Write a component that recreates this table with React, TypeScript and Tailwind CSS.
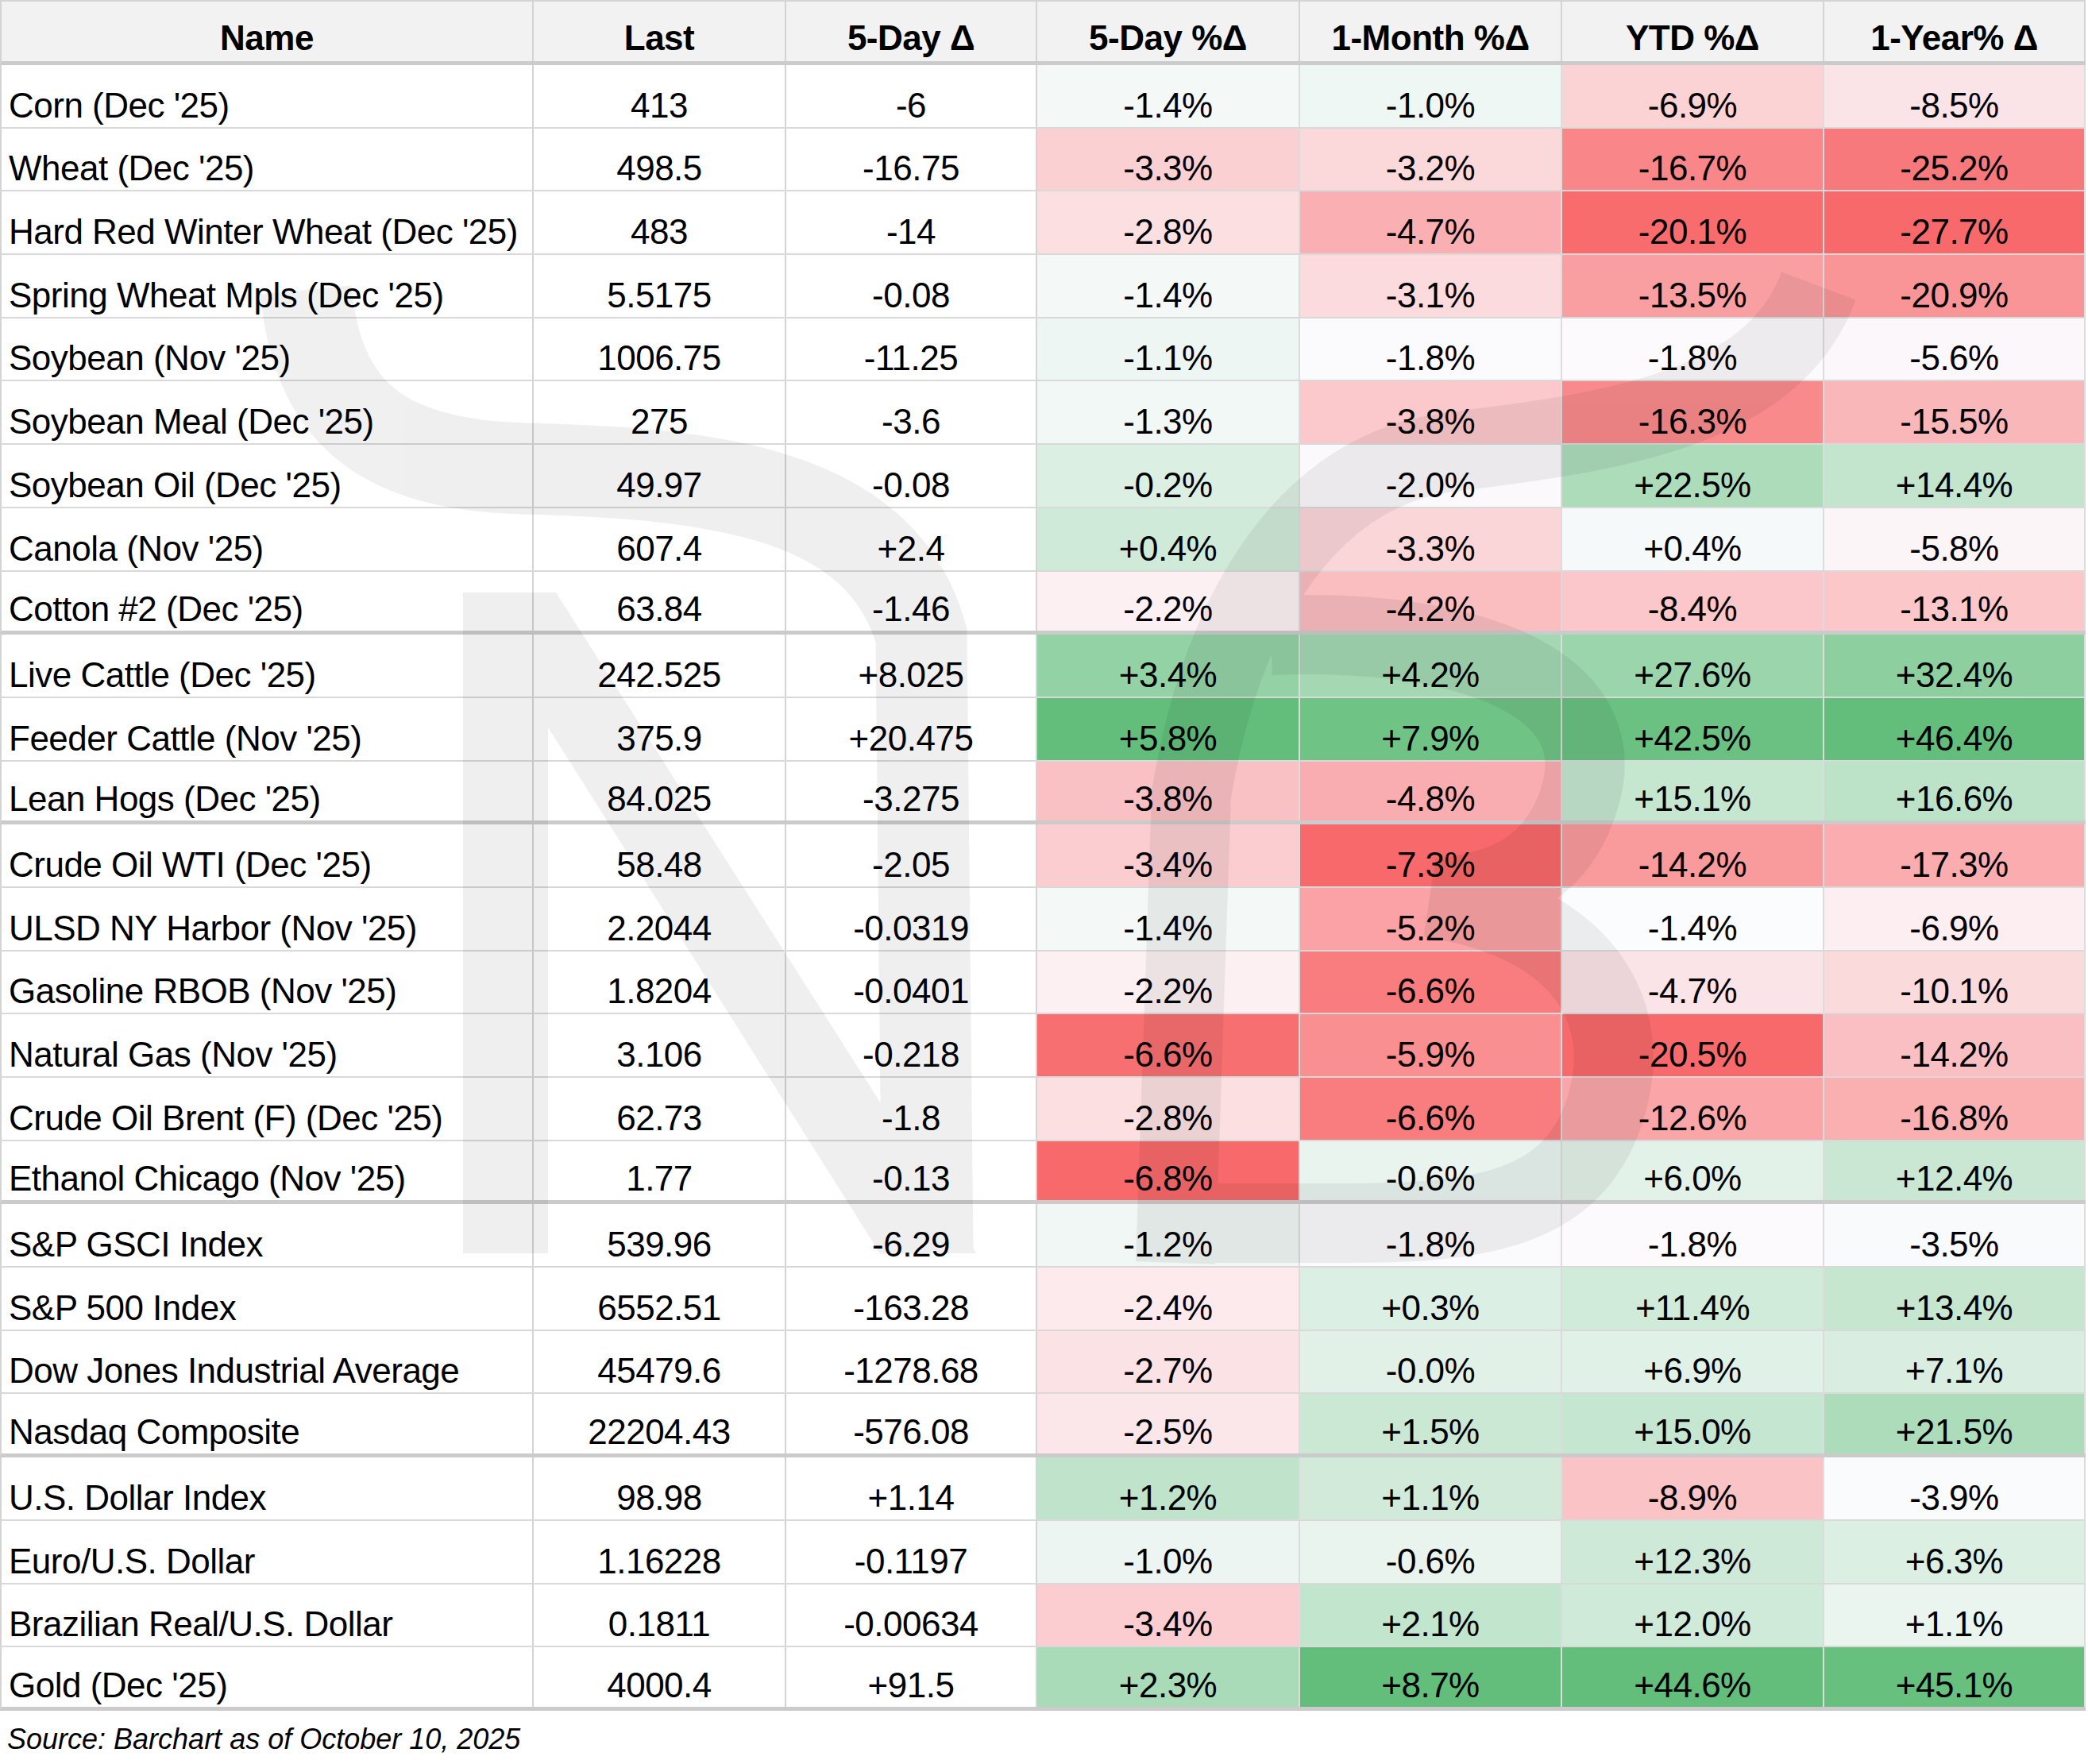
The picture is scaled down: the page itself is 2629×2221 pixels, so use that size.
import React from 'react';

type Row = {
  name: string;
  last: string;
  d5: string;
  p5: string;
  m1: string;
  ytd: string;
  y1: string;
  end?: boolean;
};

type PctKey = 'p5' | 'm1' | 'ytd' | 'y1';

// Commodity snapshot (Barchart, Oct 10 2025)
const rows: Row[] = [
  { name: "Corn (Dec '25)", last: '413', d5: '-6', p5: '-1.4%', m1: '-1.0%', ytd: '-6.9%', y1: '-8.5%' },
  { name: "Wheat (Dec '25)", last: '498.5', d5: '-16.75', p5: '-3.3%', m1: '-3.2%', ytd: '-16.7%', y1: '-25.2%' },
  { name: "Hard Red Winter Wheat (Dec '25)", last: '483', d5: '-14', p5: '-2.8%', m1: '-4.7%', ytd: '-20.1%', y1: '-27.7%' },
  { name: "Spring Wheat Mpls (Dec '25)", last: '5.5175', d5: '-0.08', p5: '-1.4%', m1: '-3.1%', ytd: '-13.5%', y1: '-20.9%' },
  { name: "Soybean (Nov '25)", last: '1006.75', d5: '-11.25', p5: '-1.1%', m1: '-1.8%', ytd: '-1.8%', y1: '-5.6%' },
  { name: "Soybean Meal (Dec '25)", last: '275', d5: '-3.6', p5: '-1.3%', m1: '-3.8%', ytd: '-16.3%', y1: '-15.5%' },
  { name: "Soybean Oil (Dec '25)", last: '49.97', d5: '-0.08', p5: '-0.2%', m1: '-2.0%', ytd: '+22.5%', y1: '+14.4%' },
  { name: "Canola (Nov '25)", last: '607.4', d5: '+2.4', p5: '+0.4%', m1: '-3.3%', ytd: '+0.4%', y1: '-5.8%' },
  { name: "Cotton #2 (Dec '25)", last: '63.84', d5: '-1.46', p5: '-2.2%', m1: '-4.2%', ytd: '-8.4%', y1: '-13.1%', end: true },
  { name: "Live Cattle (Dec '25)", last: '242.525', d5: '+8.025', p5: '+3.4%', m1: '+4.2%', ytd: '+27.6%', y1: '+32.4%' },
  { name: "Feeder Cattle (Nov '25)", last: '375.9', d5: '+20.475', p5: '+5.8%', m1: '+7.9%', ytd: '+42.5%', y1: '+46.4%' },
  { name: "Lean Hogs (Dec '25)", last: '84.025', d5: '-3.275', p5: '-3.8%', m1: '-4.8%', ytd: '+15.1%', y1: '+16.6%', end: true },
  { name: "Crude Oil WTI (Dec '25)", last: '58.48', d5: '-2.05', p5: '-3.4%', m1: '-7.3%', ytd: '-14.2%', y1: '-17.3%' },
  { name: "ULSD NY Harbor (Nov '25)", last: '2.2044', d5: '-0.0319', p5: '-1.4%', m1: '-5.2%', ytd: '-1.4%', y1: '-6.9%' },
  { name: "Gasoline RBOB (Nov '25)", last: '1.8204', d5: '-0.0401', p5: '-2.2%', m1: '-6.6%', ytd: '-4.7%', y1: '-10.1%' },
  { name: "Natural Gas (Nov '25)", last: '3.106', d5: '-0.218', p5: '-6.6%', m1: '-5.9%', ytd: '-20.5%', y1: '-14.2%' },
  { name: "Crude Oil Brent (F) (Dec '25)", last: '62.73', d5: '-1.8', p5: '-2.8%', m1: '-6.6%', ytd: '-12.6%', y1: '-16.8%' },
  { name: "Ethanol Chicago (Nov '25)", last: '1.77', d5: '-0.13', p5: '-6.8%', m1: '-0.6%', ytd: '+6.0%', y1: '+12.4%', end: true },
  { name: 'S&P GSCI Index', last: '539.96', d5: '-6.29', p5: '-1.2%', m1: '-1.8%', ytd: '-1.8%', y1: '-3.5%' },
  { name: 'S&P 500 Index', last: '6552.51', d5: '-163.28', p5: '-2.4%', m1: '+0.3%', ytd: '+11.4%', y1: '+13.4%' },
  { name: 'Dow Jones Industrial Average', last: '45479.6', d5: '-1278.68', p5: '-2.7%', m1: '-0.0%', ytd: '+6.9%', y1: '+7.1%' },
  { name: 'Nasdaq Composite', last: '22204.43', d5: '-576.08', p5: '-2.5%', m1: '+1.5%', ytd: '+15.0%', y1: '+21.5%', end: true },
  { name: 'U.S. Dollar Index', last: '98.98', d5: '+1.14', p5: '+1.2%', m1: '+1.1%', ytd: '-8.9%', y1: '-3.9%' },
  { name: 'Euro/U.S. Dollar', last: '1.16228', d5: '-0.1197', p5: '-1.0%', m1: '-0.6%', ytd: '+12.3%', y1: '+6.3%' },
  { name: 'Brazilian Real/U.S. Dollar', last: '0.1811', d5: '-0.00634', p5: '-3.4%', m1: '+2.1%', ytd: '+12.0%', y1: '+1.1%' },
  { name: "Gold (Dec '25)", last: '4000.4', d5: '+91.5', p5: '+2.3%', m1: '+8.7%', ytd: '+44.6%', y1: '+45.1%', end: true },
];

// Excel 3-color scale: min red, 50th percentile white, max green
const RED = [248, 105, 107];
const WHITE = [252, 252, 255];
const GREEN = [99, 190, 123];

function scaleFor(key: PctKey) {
  const vals = rows.map((r) => parseFloat(r[key])).sort((a, b) => a - b);
  const n = vals.length;
  const mid = n % 2 ? vals[(n - 1) / 2] : (vals[n / 2 - 1] + vals[n / 2]) / 2;
  return { min: vals[0], mid, max: vals[n - 1] };
}

const scales = {
  p5: scaleFor('p5'),
  m1: scaleFor('m1'),
  ytd: scaleFor('ytd'),
  y1: scaleFor('y1'),
};

function mix(a: number[], b: number[], t: number) {
  const c = a.map((v, i) => Math.round(v + (b[i] - v) * t));
  return `rgb(${c[0]}, ${c[1]}, ${c[2]})`;
}

function cellColor(key: PctKey, text: string) {
  const v = parseFloat(text);
  const s = scales[key];
  if (v <= s.mid) {
    const t = s.mid === s.min ? 1 : (v - s.min) / (s.mid - s.min);
    return mix(RED, WHITE, t);
  }
  const t = s.max === s.mid ? 1 : (v - s.mid) / (s.max - s.mid);
  return mix(WHITE, GREEN, t);
}

const pctCols: { key: PctKey; width: string }[] = [
  { key: 'p5', width: 'w-[331px]' },
  { key: 'm1', width: 'w-[330px]' },
  { key: 'ytd', width: 'w-[330px]' },
  { key: 'y1', width: 'w-[329px]' },
];

function Watermark() {
  return (
    <svg
      className="pointer-events-none absolute left-0 top-0"
      width="2629"
      height="2221"
      viewBox="0 0 2629 2221"
    >
      <g opacity="0.06">
        <rect x="583" y="746" width="107" height="832" fill="#000" />
        <polygon points="583,746 700,746 1229,1578 1108,1578" fill="#000" />
        <path
          d="M 385 365 C 400 520, 480 585, 660 590 C 900 596, 1110 620, 1160 800 L 1168 1578"
          stroke="#000"
          strokeWidth="115"
          fill="none"
        />
        <path
          d="M 2290 360 C 2230 520, 2020 545, 1820 570 C 1650 595, 1540 760, 1500 1000 L 1480 1590"
          stroke="#000"
          strokeWidth="100"
          fill="none"
        />
        <path
          d="M 1600 800 C 1850 790, 2030 860, 1990 1000 C 1965 1090, 1900 1120, 1820 1130"
          stroke="#000"
          strokeWidth="100"
          fill="none"
        />
        <path
          d="M 1800 1130 C 2000 1160, 2060 1280, 2020 1400 C 1980 1520, 1870 1540, 1700 1540 L 1480 1540"
          stroke="#000"
          strokeWidth="100"
          fill="none"
        />
      </g>
    </svg>
  );
}

export default function App() {
  return (
    <div className="relative h-[2221px] w-[2629px] overflow-hidden bg-white font-['Liberation_Sans',Arial,sans-serif] text-black">
      {/* Header */}
      <div className="flex h-[82px] w-[2626px] border-l-2 border-t-2 border-b-[5px] border-[#d4d4d4] border-b-[#cbcbcb] bg-[#f2f2f2] text-[44px] font-bold leading-none tracking-[-0.5px]">
        <div className="flex w-[670px] items-end justify-center border-r-2 border-[#d4d4d4] pb-[7px]">Name</div>
        <div className="flex w-[318px] items-end justify-center border-r-2 border-[#d4d4d4] pb-[7px]">Last</div>
        <div className="flex w-[316px] items-end justify-center border-r-2 border-[#d4d4d4] pb-[7px]">5-Day Δ</div>
        <div className="flex w-[331px] items-end justify-center border-r-2 border-[#d4d4d4] pb-[7px]">5-Day %Δ</div>
        <div className="flex w-[330px] items-end justify-center border-r-2 border-[#d4d4d4] pb-[7px]">1-Month %Δ</div>
        <div className="flex w-[330px] items-end justify-center border-r-2 border-[#d4d4d4] pb-[7px]">YTD %Δ</div>
        <div className="flex w-[329px] items-end justify-center border-r-2 border-[#d4d4d4] pb-[7px]">1-Year% Δ</div>
      </div>

      {/* Rows */}
      {rows.map((r) => (
        <div
          key={r.name}
          className={
            r.end
              ? 'flex h-[79.7px] w-[2626px] border-l-2 border-b-[5px] border-[#d4d4d4] border-b-[#cbcbcb] text-[44px] leading-none tracking-[-0.5px]'
              : 'flex h-[79.7px] w-[2626px] border-l-2 border-b-2 border-[#d4d4d4] border-b-[#d9d9d9] text-[44px] leading-none tracking-[-0.5px]'
          }
        >
          <div className="flex w-[670px] items-end border-r-2 border-[#d4d4d4] pb-[5px] pl-[9px] whitespace-nowrap">{r.name}</div>
          <div className="flex w-[318px] items-end justify-center border-r-2 border-[#d4d4d4] pb-[5px]">{r.last}</div>
          <div className="flex w-[316px] items-end justify-center border-r-2 border-[#d4d4d4] pb-[5px]">{r.d5}</div>
          {pctCols.map((c) => (
            <div
              key={c.key}
              className={`flex ${c.width} items-end justify-center border-r-2 border-[#dcdcdc] pb-[5px]`}
              style={{ backgroundColor: cellColor(c.key, r[c.key]) }}
            >
              {r[c.key]}
            </div>
          ))}
        </div>
      ))}

      <div className="pl-[9px] pt-[18px] text-[36px] italic leading-none">Source: Barchart as of October 10, 2025</div>

      <Watermark />
    </div>
  );
}
